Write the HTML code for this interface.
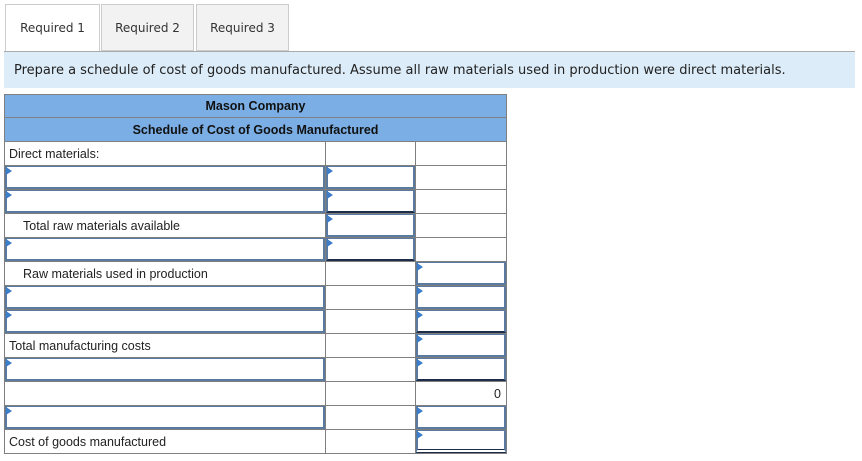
<!DOCTYPE html>
<html><head><style>
body{margin:0;background:#fff;width:862px;height:461px;position:relative;font-family:"Liberation Sans",sans-serif;overflow:hidden}
.tab{position:absolute;top:4px;height:47px;border:1px solid #ccc;background:#f2f2f2;font-family:"DejaVu Sans",sans-serif;font-size:12px;color:#333;box-sizing:border-box;text-align:center;line-height:46px}
.ins{position:absolute;left:4px;top:51px;width:851px;height:37px;background:#dcecf8;border-top:1px solid #aaa;font-family:"DejaVu Sans",sans-serif;font-size:13px;color:#222;line-height:38px;padding-left:10px;box-sizing:border-box;white-space:nowrap}
table{position:absolute;left:4px;top:94px;border-collapse:collapse;table-layout:fixed;width:502px}
tr{height:24px}
td{border:1px solid #7f7f7f;padding:0;font-size:12.5px;color:#222;position:relative;line-height:20px}
th{background:#7aaee4;border:1px solid #7f7f7f;padding:0;font-size:12.5px;color:#111;font-weight:bold;line-height:20px}
.i{position:absolute;left:0;top:0;right:0;bottom:0;border:2px solid #5a7aa0;border-width:1px 2px 2px 2px;background:#fff}
.i:before{content:"";position:absolute;left:-1px;top:0;border-left:6px solid #3d7cc9;border-top:4px solid transparent;border-bottom:4px solid transparent}
.d{border-bottom-color:#1d2c48}
.dd{border-bottom:4px double #1d2c48}
.t{padding-left:4px}.t2{padding-left:18px}
</style></head><body>
<div class="tab" style="left:5px;width:95px;background:#fff;border-bottom:none;height:48px">Required 1</div>
<div class="tab" style="left:101px;width:93px">Required 2</div>
<div class="tab" style="left:196px;width:93px">Required 3</div>
<div class="ins">Prepare a schedule of cost of goods manufactured. Assume all raw materials used in production were direct materials.</div>
<table>
<col style="width:321px"><col style="width:90px"><col style="width:91px">
<tr style="height:23px"><th colspan="3">Mason Company</th></tr>
<tr><th colspan="3">Schedule of Cost of Goods Manufactured</th></tr>
<tr><td class="t">Direct materials:</td><td></td><td></td></tr>
<tr><td><div class="i"></div></td><td><div class="i"></div></td><td></td></tr>
<tr><td><div class="i"></div></td><td><div class="i d"></div></td><td></td></tr>
<tr><td class="t2">Total raw materials available</td><td><div class="i"></div></td><td></td></tr>
<tr><td><div class="i"></div></td><td><div class="i d"></div></td><td></td></tr>
<tr><td class="t2">Raw materials used in production</td><td></td><td><div class="i"></div></td></tr>
<tr><td><div class="i"></div></td><td></td><td><div class="i"></div></td></tr>
<tr><td><div class="i"></div></td><td></td><td><div class="i d"></div></td></tr>
<tr><td class="t">Total manufacturing costs</td><td></td><td><div class="i"></div></td></tr>
<tr><td><div class="i"></div></td><td></td><td><div class="i d"></div></td></tr>
<tr><td></td><td></td><td style="text-align:right;padding-right:5px">0</td></tr>
<tr><td><div class="i"></div></td><td></td><td><div class="i"></div></td></tr>
<tr><td class="t">Cost of goods manufactured</td><td></td><td><div class="i dd"></div></td></tr>
</table>
</body></html>
